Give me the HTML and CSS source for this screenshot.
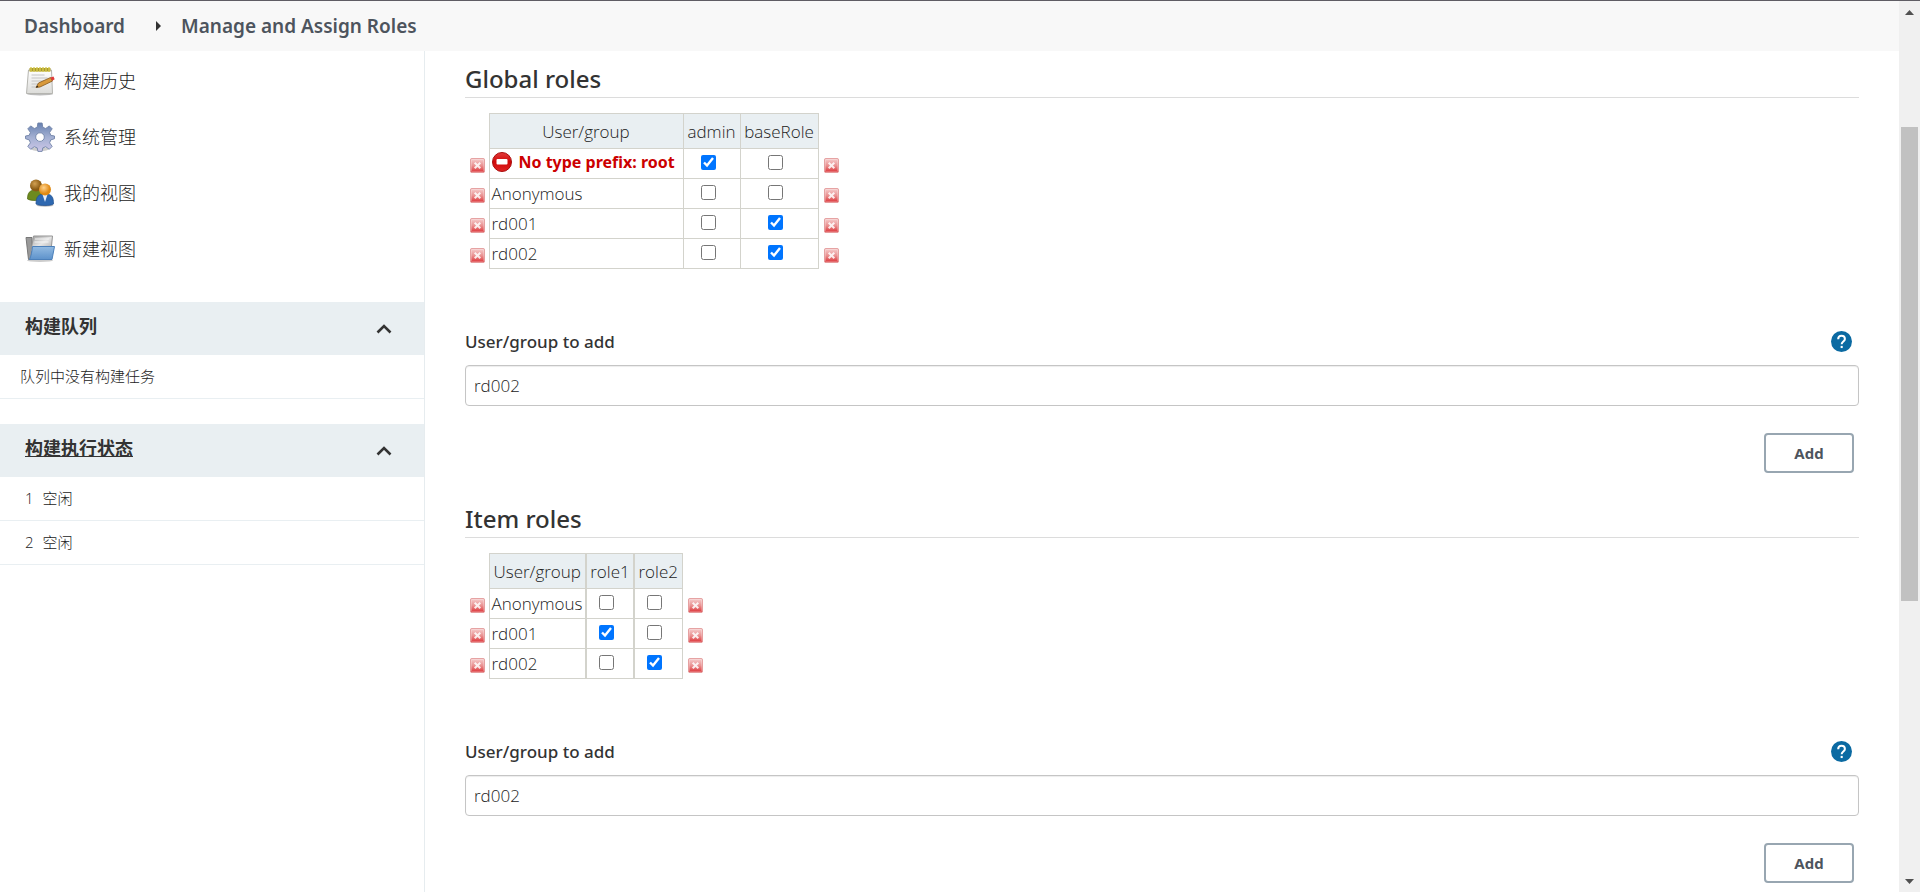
FILE: index.html
```html
<!DOCTYPE html>
<html lang="zh-CN">
<head>
<meta charset="utf-8">
<title>Manage and Assign Roles</title>
<link rel="stylesheet" href="styles.css">
</head>
<body>
<svg class="defs" aria-hidden="true">
  <defs>
    <linearGradient id="red" x1="0" y1="0" x2="0" y2="1"><stop offset="0" stop-color="#f6d0d0"/><stop offset=".5" stop-color="#ea9292"/><stop offset="1" stop-color="#dc2f33"/></linearGradient>
    <linearGradient id="gearfill" x1="0" y1="0" x2="0" y2="1"><stop offset="0" stop-color="#6680b0"/><stop offset=".5" stop-color="#a3b0d2"/><stop offset="1" stop-color="#cdc7e8"/></linearGradient>
    <linearGradient id="paper" x1="0" y1="0" x2="0" y2="1"><stop offset="0" stop-color="#fff"/><stop offset="1" stop-color="#dcdcd9"/></linearGradient>
    <linearGradient id="grey" x1="0" y1="0" x2="1" y2="1"><stop offset="0" stop-color="#9b9b9b"/><stop offset=".5" stop-color="#e6e6e6"/><stop offset="1" stop-color="#a5a5a5"/></linearGradient>
    <linearGradient id="blue" x1="0" y1="0" x2="0" y2="1"><stop offset="0" stop-color="#93bbe2"/><stop offset="1" stop-color="#5d92cb"/></linearGradient>
    <radialGradient id="brown" cx=".4" cy=".35"><stop offset="0" stop-color="#d2a052"/><stop offset="1" stop-color="#8a5a13"/></radialGradient>
    <radialGradient id="orange" cx=".4" cy=".35"><stop offset="0" stop-color="#ffd18a"/><stop offset="1" stop-color="#e08a14"/></radialGradient>
    <linearGradient id="stopfill" x1="0" y1="0" x2="0" y2="1"><stop offset="0" stop-color="#e23b3b"/><stop offset=".5" stop-color="#cf0808"/><stop offset="1" stop-color="#e02424"/></linearGradient>
    <symbol id="del" viewBox="0 0 16 16"><rect x=".5" y=".5" width="15" height="15" rx="1.5" fill="url(#red)" stroke="#e39a9a"/><rect x="1.5" y="1.5" width="13" height="13" rx="1" fill="none" stroke="#fff" stroke-opacity=".28"/><path d="M5.800 5.800l4.400 4.400M10.200 5.800l-4.400 4.400" stroke="#fff" stroke-width="2.200" stroke-linecap="square" opacity=".85"/></symbol>
    <symbol id="help" viewBox="0 0 24 24"><circle cx="12" cy="12" r="12" fill="#0b6aa2"/><path d="M8.200 9.300c0-2.600 1.600-4 3.800-4s3.900 1.400 3.900 3.700c0 2.900-3.700 3-3.700 6" fill="none" stroke="#fff" stroke-width="2.300"/><rect x="11" y="17" width="2.400" height="2.500" fill="#fff"/></symbol>
    <symbol id="chev" viewBox="0 0 16 10"><path d="M1.500 8.500L8 2l6.500 6.500" fill="none" stroke="#333" stroke-width="2.600"/></symbol>
  </defs>
</svg>
<div class="page">
  <nav class="crumbs" aria-label="Breadcrumb">
    <a href="#">Dashboard</a>
    <svg class="crumb-arrow" viewBox="0 0 5 10"><path d="M0 0l5 5-5 5z" fill="#333"/></svg>
    <a href="#">Manage and Assign Roles</a>
  </nav>
  <div class="columns">
    <aside class="side">
      <nav class="tasks">
        <a class="task" href="#">
          <svg viewBox="0 0 30 30"><ellipse cx="15" cy="28" rx="13" ry="1.500" fill="#bbb"/><path d="M3.500 4h23l1 23.500h-26z" fill="url(#paper)" stroke="#b5b5b0"/><path d="M4.500 2h21v3.500h-21z" fill="#a8992a"/><path d="M6 1v5M9 1v5M12 1v5M15 1v5M18 1v5M21 1v5M24 1v5" stroke="#d8c94e" stroke-width="1.400"/><path d="M6.500 9h13M6.500 12h16M6.500 15h13M6.500 18h7M6.500 21h5" stroke="#c4c4c4"/><path d="M11 21.500l2.500-4.500 12-5.500 2 3.500-12.500 6z" fill="#d99a3c" stroke="#84551a" stroke-width=".8"/><path d="M25.500 11.500l3-1 1.200 2.700-2.500 1.600z" fill="#e03a3a"/><path d="M11 21.500l1.200-2 1.200 1.400z" fill="#222"/></svg>
          <span>构建历史</span></a>
        <a class="task" href="#">
          <svg viewBox="0 0 30 30"><ellipse cx="15" cy="27" rx="9" ry="2" fill="#ccc"/><path fill-rule="evenodd" d="M12.900 1h4.200l.7 4.300 2.900 1.200 3.600-2.600 2.900 2.900-2.600 3.600 1.200 2.900 3.700.7v2.700l-3.700 1.200-1.200 2.900 2.600 3.600-2.900 2.900-3.600-2.600-2.900 1.200-.7 3.500h-4.200l-.7-3.500-2.900-1.200-3.600 2.600-2.900-2.900 2.600-3.600-1.200-2.900-3.700-1.200v-2.700l3.700-.7 1.200-2.900-2.600-3.600 2.900-2.900 3.600 2.600 2.900-1.200zM15 10.800a4.300 4.300 0 1 0 0 8.600 4.300 4.300 0 0 0 0-8.600z" fill="url(#gearfill)" stroke="#7183a8" stroke-width=".9"/></svg>
          <span>系统管理</span></a>
        <a class="task" href="#">
          <svg viewBox="0 0 30 30"><path d="M2.500 21c0-6 2-9 8-9s8 3 8 9c-3 2-13 2-16 0z" fill="#6d8a1e" stroke="#4e6510" stroke-width=".7"/><circle cx="11" cy="7.500" r="6" fill="url(#brown)"/><ellipse cx="20" cy="27.500" rx="8.500" ry="1.200" fill="#bbb"/><path d="M11 26c0-7 2-10 9-10s8.500 3 8.500 10c-3 2-14 2-17.500 0z" fill="#2e68b0" stroke="#214f8c" stroke-width=".7"/><path d="M17.500 16.500l2.500 7.500 2.500-7.500z" fill="#e6eefb"/><circle cx="20" cy="11.500" r="6" fill="url(#orange)"/></svg>
          <span>我的视图</span></a>
        <a class="task" href="#">
          <svg viewBox="0 0 30 30"><ellipse cx="15" cy="26.500" rx="13" ry="1.500" fill="#ccc"/><path d="M1 3.500h6v22h-3.500z" fill="#999" stroke="#777"/><path d="M8.500 2h19l-1.500 15h-20z" fill="url(#grey)" stroke="#959595"/><path d="M10 5h14M9.500 8h14" stroke="#f4f4f4"/><path d="M7.500 12.500h22l-2.500 13h-22.500c1.500-3 2.500-8 3-13z" fill="url(#blue)" stroke="#4c80ba"/></svg>
          <span>新建视图</span></a>
      </nav>
      <section class="pane">
        <header class="pane-head"><h2>构建队列</h2><button class="fold" type="button" aria-label="收起构建队列"><svg><use href="#chev"/></svg></button></header>
        <p class="pane-row queue">队列中没有构建任务</p>
      </section>
      <section class="pane">
        <header class="pane-head"><h2><a href="#">构建执行状态</a></h2><button class="fold" type="button" aria-label="收起构建执行状态"><svg><use href="#chev"/></svg></button></header>
        <p class="pane-row"><span>1</span><span>空闲</span></p>
        <p class="pane-row"><span>2</span><span>空闲</span></p>
      </section>
    </aside>
    <main class="main">
      <section class="roles">
        <h1>Global roles</h1>
        <table class="matrix">
          <colgroup><col class="c-del"><col class="c-name-wide"><col class="c-admin"><col class="c-base"><col class="c-del"></colgroup>
          <thead><tr><td></td><th>User/group</th><th>admin</th><th>baseRole</th><td></td></tr></thead>
          <tbody>
            <tr><td><button class="del" type="button" aria-label="Delete root"><svg><use href="#del"/></svg></button></td><td class="cell name"><span class="error"><svg viewBox="0 0 20 20"><circle cx="10" cy="10" r="9.500" fill="url(#stopfill)" stroke="#a80d0d"/><rect x="4.500" y="7" width="11" height="5.500" rx="1" fill="#fff"/></svg>No type prefix: root</span></td><td class="cell"><input type="checkbox" aria-label="root admin" checked></td><td class="cell"><input type="checkbox" aria-label="root baseRole"></td><td><button class="del" type="button" aria-label="Delete root"><svg><use href="#del"/></svg></button></td></tr>
            <tr><td><button class="del" type="button" aria-label="Delete Anonymous"><svg><use href="#del"/></svg></button></td><td class="cell name">Anonymous</td><td class="cell"><input type="checkbox" aria-label="Anonymous admin"></td><td class="cell"><input type="checkbox" aria-label="Anonymous baseRole"></td><td><button class="del" type="button" aria-label="Delete Anonymous"><svg><use href="#del"/></svg></button></td></tr>
            <tr><td><button class="del" type="button" aria-label="Delete rd001"><svg><use href="#del"/></svg></button></td><td class="cell name">rd001</td><td class="cell"><input type="checkbox" aria-label="rd001 admin"></td><td class="cell"><input type="checkbox" aria-label="rd001 baseRole" checked></td><td><button class="del" type="button" aria-label="Delete rd001"><svg><use href="#del"/></svg></button></td></tr>
            <tr><td><button class="del" type="button" aria-label="Delete rd002"><svg><use href="#del"/></svg></button></td><td class="cell name">rd002</td><td class="cell"><input type="checkbox" aria-label="rd002 admin"></td><td class="cell"><input type="checkbox" aria-label="rd002 baseRole" checked></td><td><button class="del" type="button" aria-label="Delete rd002"><svg><use href="#del"/></svg></button></td></tr>
          </tbody>
        </table>
        <div class="label-row"><label for="g-user">User/group to add</label><button class="help" type="button" aria-label="Help"><svg><use href="#help"/></svg></button></div>
        <input class="text" id="g-user" type="text" value="rd002">
        <div class="actions"><button class="add" type="button">Add</button></div>
      </section>
      <section class="roles">
        <h1>Item roles</h1>
        <table class="matrix items">
          <colgroup><col class="c-del"><col class="c-name"><col class="c-role"><col class="c-role"><col class="c-del"></colgroup>
          <thead><tr><td></td><th>User/group</th><th>role1</th><th>role2</th><td></td></tr></thead>
          <tbody>
            <tr><td><button class="del" type="button" aria-label="Delete Anonymous"><svg><use href="#del"/></svg></button></td><td class="cell name">Anonymous</td><td class="cell"><input type="checkbox" aria-label="Anonymous role1"></td><td class="cell"><input type="checkbox" aria-label="Anonymous role2"></td><td><button class="del" type="button" aria-label="Delete Anonymous"><svg><use href="#del"/></svg></button></td></tr>
            <tr><td><button class="del" type="button" aria-label="Delete rd001"><svg><use href="#del"/></svg></button></td><td class="cell name">rd001</td><td class="cell"><input type="checkbox" aria-label="rd001 role1" checked></td><td class="cell"><input type="checkbox" aria-label="rd001 role2"></td><td><button class="del" type="button" aria-label="Delete rd001"><svg><use href="#del"/></svg></button></td></tr>
            <tr><td><button class="del" type="button" aria-label="Delete rd002"><svg><use href="#del"/></svg></button></td><td class="cell name">rd002</td><td class="cell"><input type="checkbox" aria-label="rd002 role1"></td><td class="cell"><input type="checkbox" aria-label="rd002 role2" checked></td><td><button class="del" type="button" aria-label="Delete rd002"><svg><use href="#del"/></svg></button></td></tr>
          </tbody>
        </table>
        <div class="label-row"><label for="i-user">User/group to add</label><button class="help" type="button" aria-label="Help"><svg><use href="#help"/></svg></button></div>
        <input class="text" id="i-user" type="text" value="rd002">
        <div class="actions"><button class="add" type="button">Add</button></div>
      </section>
    </main>
  </div>
</div>
<div class="scroll" aria-hidden="true">
  <svg viewBox="0 0 9 5"><path d="M0 5l4.500-5L9 5z" fill="#505050"/></svg>
  <div class="track"><div class="thumb"></div></div>
  <svg viewBox="0 0 9 5"><path d="M0 0l4.500 5L9 0z" fill="#505050"/></svg>
</div>
</body>
</html>
```
FILE: styles.css
```css
* { box-sizing: border-box; }
body {
  margin: 0;
  min-height: 100vh;
  display: flex;
  border-top: 1px solid #5f5d64;
  background: #fff;
  color: #222;
  font-family: "Open Sans", "Noto Sans", "Noto Sans CJK SC", sans-serif;
  font-size: 17px;
  font-weight: 300;
}
h1, h2, p { margin: 0; }
a { color: inherit; text-decoration: none; }
button { padding: 0; border: 0; background: none; font-family: inherit; cursor: pointer; }
svg { display: block; }
.defs { position: absolute; width: 0; height: 0; }

.page { flex: 1; min-width: 0; display: flex; flex-direction: column; }
.crumbs {
  display: flex;
  align-items: center;
  height: 50px;
  padding: 0 24px;
  background: #f8f8f8;
  color: #4d545d;
  font-family: "Noto Sans", sans-serif;
  font-size: 19px;
  font-weight: 600;
}
.crumb-arrow { width: 5px; height: 10px; margin: 0 20px 0 31px; }
.columns { flex: 1; display: flex; }

.side { flex: none; width: 425px; border-right: 1px solid #e6ecef; }
.tasks { padding: 2px 0 25px; }
.task { display: flex; align-items: center; gap: 9px; height: 56px; padding: 0 25px; font-size: 18px; }
.task svg { width: 30px; height: 30px; }
.task span { padding-bottom: 2px; }
.pane { margin-bottom: 25px; }
.pane-head {
  display: flex;
  align-items: center;
  justify-content: space-between;
  height: 53px;
  padding: 0 32px 0 25px;
  background: #e9eff2;
}
.pane-head h2 { padding-bottom: 5px; color: #333; font-size: 18px; font-weight: 700; line-height: 24px; }
.pane-head a { text-decoration: underline; }
.fold svg { width: 16px; height: 10px; }
.pane-row {
  display: flex;
  align-items: center;
  gap: 9px;
  height: 44px;
  padding: 0 25px 2px;
  border-bottom: 1px solid #e9eff2;
  font-size: 15px;
}
.queue { padding-left: 20px; }

.main { flex: 1; min-width: 0; padding: 0 40px; }
.roles h1 {
  height: 47px;
  padding-top: 12px;
  border-bottom: 1px solid #dcdcdc;
  color: #333;
  font-family: "Noto Sans", sans-serif;
  font-size: 24px;
  font-weight: 500;
  line-height: 32px;
}
.matrix { margin: 15px 0 54px; border-collapse: collapse; table-layout: fixed; width: 377px; }
.items { width: 241px; }
.c-del { width: 24px; }
.c-name-wide { width: 194px; }
.c-admin { width: 57px; }
.c-base { width: 78px; }
.c-name { width: 97px; }
.c-role { width: 48px; }
.matrix th {
  height: 35px;
  padding: 0;
  border: 1px solid #d3d3cc;
  background: #e9eff2;
  font-weight: 300;
  text-align: center;
}
.matrix td { height: 30px; padding: 0; line-height: 24px; vertical-align: middle; }
.matrix .cell { border: 1px solid #d3d3cc; text-align: center; vertical-align: top; }
.items .cell + .cell, .items th + th { border-left-width: 2px; }
.matrix .name { padding: 1px 0 0 2px; text-align: left; vertical-align: middle; white-space: nowrap; }
.matrix input { display: block; width: 15px; height: 15px; margin: 6px 0 0 calc(50% - 11px); }
.del { display: block; margin: 4px 0 0 5px; }
.del svg { width: 15px; height: 15px; }
.error {
  display: flex;
  align-items: center;
  gap: 7px;
  padding-bottom: 4px;
  color: #c00;
  font-family: "Noto Sans", sans-serif;
  font-size: 16px;
  font-weight: 700;
}
.error svg { width: 20px; height: 20px; }
.label-row { display: flex; align-items: center; justify-content: space-between; height: 42px; padding: 0 7px 6px 0; }
.label-row label { color: #333; font-family: "Noto Sans", sans-serif; font-size: 17px; font-weight: 500; }
.help svg { width: 21px; height: 21px; }
.text {
  display: block;
  width: 100%;
  height: 41px;
  padding: 0 8px;
  border: 1px solid #c5c5c5;
  border-radius: 4px;
  background: #fff;
  box-shadow: inset 0 1px 1px rgba(0, 0, 0, .075);
  color: #222;
  font: inherit;
}
.actions { display: flex; justify-content: flex-end; padding: 27px 5px 0; }
.roles + .roles { margin-top: 18px; }
.add {
  width: 90px;
  height: 40px;
  border: 2px solid #98a6b1;
  border-radius: 4px;
  color: #4d545d;
  font-size: 15px;
  font-weight: 700;
}
.scroll {
  flex: none;
  display: flex;
  flex-direction: column;
  align-items: center;
  width: 21px;
  padding: 9px 2px 8px;
  background: #f0f0f0;
}
.scroll svg { width: 9px; height: 5px; }
.track { flex: 1; display: flex; flex-direction: column; width: 100%; padding-top: 112px; }
.thumb { flex: 0 0 63%; background: #c1c1c1; }
```
